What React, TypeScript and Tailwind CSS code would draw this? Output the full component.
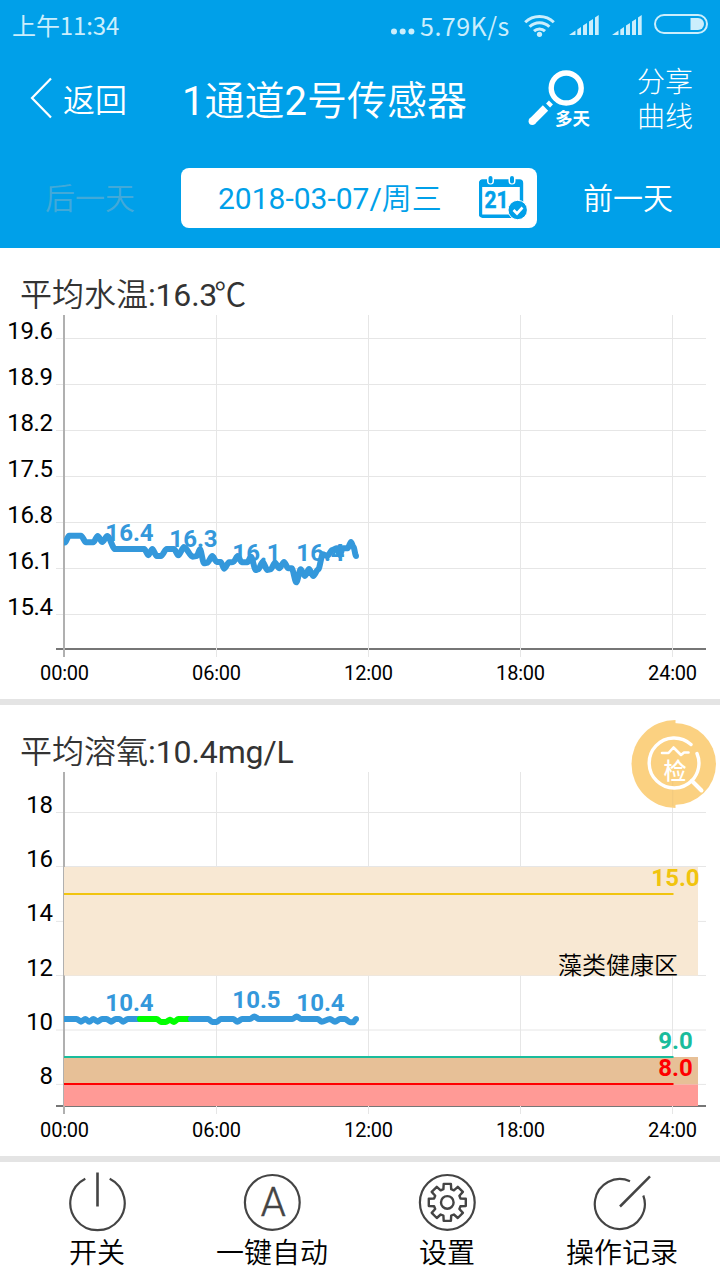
import React from 'react';

type Point = [number, number];

interface Series {
  color: string;
  points: Point[];
}

interface Mark {
  text: string;
  x: number;
  y: number;
  color: string;
}

interface ChartProps {
  id: string;
  ticks: { label: string; y: number }[];
  series: Series[];
  marks: Mark[];
  children?: React.ReactNode;
}

const BLUE = '#3498db';
const GREEN = '#00ff00';

const hours = [
  { label: '00:00', x: 64.5 },
  { label: '06:00', x: 216.5 },
  { label: '12:00', x: 368.5 },
  { label: '18:00', x: 520.5 },
  { label: '24:00', x: 672.5 },
];

const tempTicks = ['19.6', '18.9', '18.2', '17.5', '16.8', '16.1', '15.4'].map((label, i) => ({
  label,
  y: 23.5 + i * 46,
}));

const oxygenTicks = [
  { label: '18', y: 40.5 },
  { label: '16', y: 94.5 },
  { label: '14', y: 149.4 },
  { label: '12', y: 203.5 },
  { label: '10', y: 258 },
  { label: '8', y: 312.4 },
];

const tempPoints: Point[] = [
  [65, 227.5], [69, 220.7], [81, 220.7], [86, 227.3], [93.3, 227.3], [97.7, 221], [102.3, 227], [107.3, 221],
  [115, 234], [144.3, 234], [148.3, 240.3], [152.3, 234], [156.7, 241], [161, 241], [166.7, 234], [174, 234],
  [178.3, 240.3], [184, 232], [192.7, 241.7], [196.7, 241], [200, 234.3], [204, 248.3], [207.3, 247.7], [212.3, 241],
  [216.7, 247], [220.7, 247], [224.3, 253.7], [229, 247.3], [233.3, 247], [237.7, 241], [241.7, 247.3], [247.3, 247.3],
  [251, 241.7], [255.7, 255], [258.3, 254.3], [262.7, 246.7], [267.3, 255], [270.7, 254.3], [275, 247.7], [279.3, 253.3],
  [284, 247], [288.3, 253.3], [291.7, 253.3], [296.3, 267.3], [300.7, 254.3], [305, 261], [309, 254], [313.3, 261],
  [318.3, 254.3], [322.7, 239.3], [327.3, 241], [332.3, 235], [336.7, 233.3], [340, 240], [342.7, 233.3], [347.7, 233.3],
  [351, 227], [353.5, 232], [356, 241],
];

const oxygenBefore: Point[] = [
  [64, 247], [76.7, 247], [81, 249.7], [85.3, 247], [89.3, 249.7], [93.3, 247], [97.7, 249.7], [102, 247],
  [106.7, 247], [111, 249.7], [115.7, 247], [119.3, 247], [123.3, 249.7], [127.7, 247], [139, 247],
];

const oxygenHealthy: Point[] = [
  [140, 247], [156.7, 247], [161, 250], [165.7, 250], [170, 247.7], [174, 250], [178.3, 247], [189, 247],
];

const oxygenAfter: Point[] = [
  [191, 247], [208.3, 247], [212.3, 250], [216.7, 250], [220.7, 247], [233.3, 247], [237.3, 249.8], [242, 247],
  [250, 247], [254.3, 244.5], [259, 247], [292.3, 247], [296.7, 244.5], [301.3, 247], [317.7, 247], [321.7, 249.8],
  [330, 247], [335, 249.8], [340, 247], [345, 247], [350, 250.3], [353.3, 250.3], [356, 247],
];

const tempMarks: Mark[] = [
  { text: '16.4', x: 129.5, y: 226, color: BLUE },
  { text: '16.3', x: 193.5, y: 232, color: BLUE },
  { text: '16.1', x: 256.5, y: 246, color: BLUE },
  { text: '16.4', x: 320.5, y: 246, color: BLUE },
];

const oxygenMarks: Mark[] = [
  { text: '10.4', x: 129.5, y: 239, color: BLUE },
  { text: '10.5', x: 256.5, y: 236, color: BLUE },
  { text: '10.4', x: 320.5, y: 239, color: BLUE },
  { text: '15.0', x: 675.5, y: 114, color: '#f1c40f' },
  { text: '9.0', x: 675.5, y: 277, color: '#1abc9c' },
  { text: '8.0', x: 675.5, y: 304, color: '#ff0000' },
];

// horizontal control handles keep peaks and dips rounded
function toPath(points: Point[]) {
  return points
    .map(([x, y], i) => {
      if (i === 0) return `M${x} ${y}`;
      const [px, py] = points[i - 1];
      const dx = (x - px) * 0.3;
      return `C${px + dx} ${py} ${x - dx} ${y} ${x} ${y}`;
    })
    .join('');
}

function Chart({ id, ticks, series, marks, children }: ChartProps) {
  return (
    <svg width="720" height="384" viewBox="0 0 720 384" className="block">
      <clipPath id={id}>
        <rect x="64" y="0" width="634" height="334" />
      </clipPath>
      {ticks.map((t) => (
        <path key={t.label} d={`M56 ${t.y}H706`} stroke="#e6e6e6" />
      ))}
      <path d="M56 334H706" stroke="#767676" strokeWidth="2" />
      {hours.slice(1).map((h) => (
        <path key={h.label} d={`M${h.x} 0V342`} stroke="#e6e6e6" />
      ))}
      <path d="M64 0V342" stroke="#b0b0b0" strokeWidth="2" />

      {children}

      <g clipPath={`url(#${id})`}>
        {series.map((s, i) => (
          <path
            key={i}
            d={toPath(s.points)}
            fill="none"
            stroke={s.color}
            strokeWidth="6"
            strokeLinejoin="round"
            strokeLinecap="round"
          />
        ))}
      </g>

      {ticks.map((t) => (
        <text key={t.label} x="52.5" y={Math.round(t.y)} textAnchor="end" fontSize="24" letterSpacing="-.4">
          {t.label}
        </text>
      ))}
      {hours.map((h) => (
        <text key={h.label} x={h.x} y="365" textAnchor="middle" fontSize="20" letterSpacing="-.2">
          {h.label}
        </text>
      ))}
      {marks.map((m, i) => (
        <text key={i} x={m.x} y={m.y} textAnchor="middle" fontSize="24" fontWeight="700" fill={m.color}>
          {m.text}
        </text>
      ))}
    </svg>
  );
}

function SignalIcon() {
  return (
    <svg width="30" height="20" viewBox="0 0 30 20" fill="#cbeefc">
      <path d="M0 20L6.5 15.5V20ZM8.3 14.5L12 12V20H8.3ZM14 10.5L18 8V20H14ZM20 6.5L24 4V20H20ZM26 2.5L29.7 0V20H26Z" />
    </svg>
  );
}

function StatusBar() {
  return (
    <div className="flex h-[50px] items-center justify-between pl-3 pr-3 text-[24px] leading-[50px] text-[#cbeefc] font-['Noto_Sans_CJK_SC',sans-serif]">
      <span className="tracking-[-0.1px]">上午11:34</span>
      <div className="flex items-center">
        <svg width="26" height="50" viewBox="0 0 26 50" fill="#cbeefc">
          <circle cx="4" cy="31.5" r="3" />
          <circle cx="12.7" cy="31.5" r="3" />
          <circle cx="21.4" cy="31.5" r="3" />
        </svg>
        <span className="ml-1 w-[90px] whitespace-nowrap text-[25px] tracking-[0.5px]">5.79K/s</span>
        <svg className="ml-[14px]" width="31" height="23" viewBox="0 0 31 23" fill="none" stroke="#cbeefc" strokeWidth="3">
          <path d="M1.2 8.2A20.5 20.5 0 0 1 29.8 8.2" />
          <path d="M5.6 12.8A14 14 0 0 1 25.4 12.8" />
          <path d="M10 17.2A8 8 0 0 1 21 17.2" />
          <circle cx="15.5" cy="20.3" r="2.6" fill="#cbeefc" stroke="none" />
        </svg>
        <div className="-mt-px ml-[14px] flex gap-[13px]">
          <SignalIcon />
          <SignalIcon />
        </div>
        <svg className="-mt-0.5 ml-3" width="54" height="20" viewBox="0 0 54 20">
          <rect x="1" y="1" width="52" height="18" rx="9" fill="none" stroke="#cbeefc" strokeWidth="2" />
          <path d="M36.5 4H44A6 6 0 0 1 44 16H36.5Z" fill="#cbeefc" />
        </svg>
      </div>
    </div>
  );
}

function MultiDayIcon() {
  return (
    <svg width="66" height="62" viewBox="0 0 66 62" fill="none" stroke="#fff">
      <circle cx="39.2" cy="19" r="15" strokeWidth="5.4" />
      <path d="M20.5 33L24.5 37" strokeWidth="4" />
      <path d="M5.2 52.3L18.5 39" strokeWidth="7.5" />
      <circle cx="5.3" cy="52.2" r="3.7" fill="#fff" stroke="none" />
      <text x="28" y="55.5" fontSize="17.5" fontWeight="700" fill="#fff" stroke="none">
        多天
      </text>
    </svg>
  );
}

function CalendarIcon() {
  return (
    <svg width="48" height="44" viewBox="0 0 48 44">
      <rect x="1.5" y="5" width="41" height="35.2" rx="2" fill="#fff" stroke="#00a0e9" strokeWidth="3.4" />
      <path d="M1 4H43V11H1Z" fill="#00a0e9" />
      <path d="M8 0V5A3.5 3.5 0 0 0 15 5V0M29.5 0V5A3.5 3.5 0 0 0 36.5 5V0" fill="#fff" />
      <path d="M11.5 2V5.5M33 2V5.5" stroke="#00a0e9" strokeWidth="4" strokeLinecap="round" />
      <text
        x="5.5"
        y="32"
        fontSize="23"
        fontWeight="700"
        fill="#00a0e9"
        stroke="#00a0e9"
        strokeWidth=".5"
        textLength="24"
        lengthAdjust="spacingAndGlyphs"
      >
        21
      </text>
      <circle cx="38.7" cy="34" r="9.7" fill="#00a0e9" stroke="#fff" strokeWidth="1" />
      <path d="M34.5 34L38 37.5L43.5 31.5" fill="none" stroke="#fff" strokeWidth="2.6" />
    </svg>
  );
}

function Header() {
  return (
    <header className="h-[248px] bg-[#00a0e9] text-white">
      <StatusBar />
      <div className="flex h-[100px] items-center">
        <button className="flex w-[182px] items-center pl-[30px] text-[32px] font-[350]">
          <svg className="mb-1" width="23" height="42" viewBox="0 0 23 42" fill="none" stroke="#fff" strokeWidth="2.2">
            <path d="M21 1.5L2 21L21 40.5" />
          </svg>
          <span className="ml-[10px] pt-0.5 leading-[48px]">返回</span>
        </button>
        <h1 className="w-[345px] whitespace-nowrap pt-1 text-[40px] font-[350] leading-[60px]">
          <span className="font-normal">1</span>通道<span className="font-normal">2</span>号传感器
        </h1>
        <MultiDayIcon />
        <button className="ml-11 w-14 text-[28px] font-light leading-[35px]">分享曲线</button>
      </div>
      <div className="flex h-[98px] items-start pt-[18px] text-[30px] leading-[60px]">
        <button className="w-[181px] pl-[45px] pt-px text-left font-[350] text-[#42a9d8]">后一天</button>
        <div className="flex h-[60px] w-[356px] items-center rounded-lg bg-white pl-[37px] text-[#00a0e9]">
          <span className="w-[261px] pt-0.5">
            2018-03-07/<span className="font-[350]">周三</span>
          </span>
          <CalendarIcon />
        </div>
        <button className="pl-[46px] pt-px font-[350]">前一天</button>
      </div>
    </header>
  );
}

function InspectBadge() {
  return (
    <svg className="absolute left-[630px] top-[14px]" width="90" height="92" viewBox="0 0 90 92" fill="none">
      <path d="M45.5 1A44 44 0 0 0 45.5 89Z" fill="#fbd181" />
      <path d="M44 4A42 41 0 0 1 44 86Z" fill="#fbd181" />
      <path d="M42.7 60V87" stroke="#f1c97f" />
      <g stroke="#fff" strokeLinecap="round" strokeLinejoin="round">
        <path d="M61 25.5A25 25 0 1 0 62 61.5" strokeWidth="3.4" />
        <path d="M67 34.5A25 25 0 0 1 62 61.5" strokeWidth="3.4" />
        <path d="M62 62L71.5 71.5" strokeWidth="4" />
        <path d="M32 34H38.5L43.5 28.5L51 36L54 33.5H58.5" strokeWidth="2.6" />
      </g>
      <text x="45" y="59.5" textAnchor="middle" fontSize="23" fontWeight="500" fill="#fff">
        检
      </text>
    </svg>
  );
}

function PowerIcon() {
  return (
    <>
      <path d="M18.3 6.7A27.2 27.2 0 1 0 42.7 6.7" />
      <path d="M30.5 .5V34.5" strokeWidth="2.6" />
    </>
  );
}

function AutoIcon() {
  return (
    <>
      <circle cx="30.3" cy="30.4" r="27.4" />
      <text x="31.3" y="43.5" textAnchor="middle" fontSize="40" fontWeight="300" fill="#444" stroke="#444" strokeWidth=".5">
        A
      </text>
    </>
  );
}

function SettingsIcon() {
  // one tooth, repeated every 45 degrees
  const teeth = Array.from({ length: 8 }, (_, i) => {
    const base = (i * Math.PI) / 4 - Math.PI / 2;
    return [
      [-0.29, 13.8],
      [-0.19, 18.8],
      [0.19, 18.8],
      [0.29, 13.8],
    ]
      .map(([a, r]) => `${(30.3 + r * Math.cos(base + a)).toFixed(1)},${(30.4 + r * Math.sin(base + a)).toFixed(1)}`)
      .join(' ');
  }).join(' ');

  return (
    <>
      <circle cx="30.3" cy="30.4" r="27.4" />
      <polygon points={teeth} strokeLinejoin="round" strokeWidth="2.4" />
      <circle cx="30.3" cy="30.4" r="6.3" strokeWidth="2.4" />
    </>
  );
}

function RecordIcon() {
  return (
    <>
      <path d="M38 9.2A25 25 0 1 0 51.3 23.5" />
      <path d="M28 34.5L58 4.3" strokeWidth="2.5" />
    </>
  );
}

const actions = [
  { label: '开关', icon: <PowerIcon /> },
  { label: '一键自动', icon: <AutoIcon /> },
  { label: '设置', icon: <SettingsIcon /> },
  { label: '操作记录', icon: <RecordIcon /> },
];

export default function App() {
  return (
    <div className="h-[1280px] w-[720px] overflow-hidden bg-white font-[Roboto,'Noto_Sans_CJK_SC',sans-serif] text-black">
      <Header />

      <section className="h-[457px] border-b-6 border-[#e4e4e4]">
        <h2 className="h-[67px] pl-5 pt-[23px] text-[32px] font-[350] leading-[48px] text-[#333]">
          平均水温<span className="font-normal tracking-[-0.2px]">:16.3</span>
          <span className="-ml-[3px]">℃</span>
        </h2>
        <Chart id="temp-area" ticks={tempTicks} series={[{ color: BLUE, points: tempPoints }]} marks={tempMarks} />
      </section>

      <section className="relative h-[457px] border-b-6 border-[#e4e4e4]">
        <h2 className="h-[67px] pl-5 pt-[23px] text-[32px] font-[350] leading-[48px] text-[#333]">
          平均溶氧<span className="font-normal tracking-[-0.1px]">:10.4mg/L</span>
        </h2>
        <Chart
          id="oxygen-area"
          ticks={oxygenTicks}
          series={[
            { color: BLUE, points: oxygenBefore },
            { color: GREEN, points: oxygenHealthy },
            { color: BLUE, points: oxygenAfter },
          ]}
          marks={oxygenMarks}
        >
          <rect x="64" y="95" width="634" height="108.5" fill="#f8e8d3" />
          <rect x="64" y="285" width="634" height="27.5" fill="#e7c097" />
          <rect x="64" y="312.5" width="634" height="21.5" fill="#ff9a96" />
          <path d="M64 122H673.5" stroke="#f1c40f" strokeWidth="2" />
          <path d="M64 285H673.5" stroke="#1abc9c" strokeWidth="2" />
          <path d="M64 312H673.5" stroke="#ff0000" strokeWidth="2" />
          <text x="618" y="202" textAnchor="middle" fontSize="24" fontWeight="350">
            藻类健康区
          </text>
        </Chart>
        <InspectBadge />
      </section>

      <nav className="flex h-[118px] px-[9px] pt-[10px]">
        {actions.map((a) => (
          <button key={a.label} className="flex w-[175px] flex-col items-center">
            <svg width="60" height="60" viewBox="0 0 60 60" fill="none" stroke="#444" strokeWidth="2.2">
              {a.icon}
            </svg>
            <span className="pl-px pt-0.5 text-[28px] font-[350] leading-[40px]">{a.label}</span>
          </button>
        ))}
      </nav>
    </div>
  );
}
